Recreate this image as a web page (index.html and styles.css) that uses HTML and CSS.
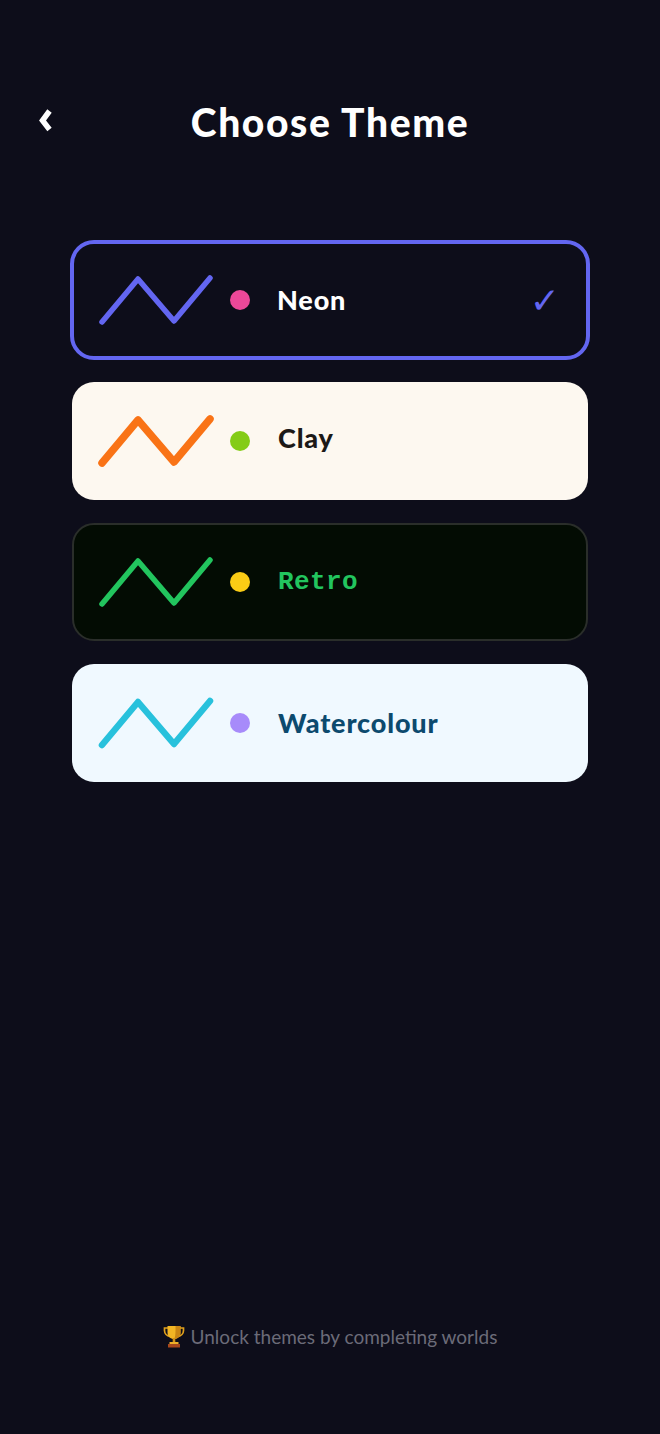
FILE: index.html
```html
<!DOCTYPE html>
<html lang="en">
<head>
    <meta charset="UTF-8">
    <meta name="viewport" content="width=device-width, initial-scale=1.0">
    <title>Choose Theme</title>
    <link rel="stylesheet" href="styles.css">
</head>
<body>
    <div class="screen">
        <header class="topbar">
            <button class="back" aria-label="Back">
                <svg width="16" height="26" viewBox="0 0 16 26">
                    <polyline points="13.500,3 6.500,12.500 13.500,21.500" fill="none" stroke="#fff" stroke-width="5.500"/>
                </svg>
            </button>
            <h1>Choose Theme</h1>
        </header>

        <div class="theme-list">
            <div class="card neon">
                <svg class="spark" width="120" height="60" viewBox="0 0 120 60"><polyline points="6,52 42,9 78,51 114,8"/></svg>
                <span class="dot"></span>
                <span class="name">Neon</span>
                <span class="check">✓</span>
            </div>
            <div class="card clay">
                <svg class="spark" width="120" height="60" viewBox="0 0 120 60"><polyline points="6,52 42,9 78,51 114,8"/></svg>
                <span class="dot"></span>
                <span class="name">Clay</span>
            </div>
            <div class="card retro">
                <svg class="spark" width="120" height="60" viewBox="0 0 120 60"><polyline points="6,52 42,9 78,51 114,8"/></svg>
                <span class="dot"></span>
                <span class="name">Retro</span>
            </div>
            <div class="card water">
                <svg class="spark" width="120" height="60" viewBox="0 0 120 60"><polyline points="6,52 42,9 78,51 114,8"/></svg>
                <span class="dot"></span>
                <span class="name">Watercolour</span>
            </div>
        </div>

        <footer class="hint">
            <svg class="trophy" width="22" height="23" viewBox="0 0 22 23">
                <path d="M5 3H1.500v2.500c0 3 2.500 5.500 5.500 6M17 3h3.500v2.500c0 3-2.500 5.500-5.500 6" fill="none" stroke="#e0a01c" stroke-width="1.700"/>
                <path d="M4.500 1h13v6.500c0 4-2.800 6.500-6.500 6.500s-6.500-2.500-6.500-6.500z" fill="#f2b524"/>
                <path d="M12.500 1h5v6.500c0 4-2.800 6.500-6.500 6.500 1.800-1.500 1.500-8 1.500-13z" fill="#c98514"/>
                <rect x="9.700" y="13" width="2.600" height="4.500" fill="#d08f18"/>
                <rect x="6.500" y="17" width="9" height="2" fill="#eeb02a"/>
                <rect x="5" y="19" width="12" height="3.500" fill="#a8481c"/>
            </svg>
            <span>Unlock themes by completing worlds</span>
        </footer>
    </div>
</body>
</html>
```

FILE: styles.css
```css
body {
    margin: 0;
    background-color: #0d0d1a;
    font-family: Lato, "Open Sans", sans-serif;
}
.screen {
    height: 1434px;
    display: flex;
    flex-direction: column;
    overflow: hidden;
}
.topbar {
    position: relative;
    height: 52px;
    margin-top: 96px;
    display: flex;
    align-items: center;
    justify-content: center;
}
.topbar h1 {
    margin: 0;
    font-size: 39px;
    font-weight: 900;
    letter-spacing: 1.600px;
    color: #fff;
}
.back {
    position: absolute;
    left: 36px;
    top: 12px;
    padding: 0;
    border: none;
    background: none;
    line-height: 0;
}
.theme-list {
    margin-top: 92px;
    padding: 0 70px;
    display: flex;
    flex-direction: column;
    gap: 23px;
}
.card {
    height: 118px;
    margin: 0 2px;
    padding: 0 24px;
    display: flex;
    align-items: center;
    border-radius: 22px;
    box-sizing: border-box;
}
.spark polyline {
    fill: none;
    stroke-linecap: round;
    stroke-linejoin: round;
    stroke-width: 5.500;
}
.dot {
    width: 20px;
    height: 20px;
    margin-left: 14px;
    border-radius: 50%;
}
.name {
    margin-left: 28px;
    margin-bottom: 2px;
    font-size: 27px;
    font-weight: 900;
    letter-spacing: 0.850px;
}
.check {
    margin-left: auto;
    padding-right: 4px;
    font-family: "DejaVu Sans", sans-serif;
    font-size: 36px;
    font-weight: 700;
    color: #6366f1;
}

.neon {
    height: 120px;
    margin: 0 0 -1px;
    padding: 0 22px;
    border: 4px solid #6366f1;
    border-radius: 24px;
    background: #0d0d1a;
}
.neon .spark polyline { stroke: #6366f1; }
.neon .dot { background: #ec4899; }
.neon .name { margin-left: 27px; color: #fff; }

.clay { background: #fdf8f0; }
.clay .spark polyline { stroke: #f97316; stroke-width: 7.500; }
.clay .dot { background: #84cc16; }
.clay .name { margin-bottom: 8px; color: #1c1917; }

.retro {
    background: #030c03;
    border: 2px solid #2a2e2a;
    padding: 0 22px;
}
.retro .spark polyline { stroke: #22c55e; }
.retro .dot { background: #facc15; }
.retro .name {
    margin-bottom: 0;
    font-family: "Liberation Mono", monospace;
    font-size: 26px;
    font-weight: 700;
    letter-spacing: 0.400px;
    color: #22c55e;
}

.water { background: #f0f9ff; }
.water .spark polyline { stroke: #28c1dc; stroke-width: 6.500; }
.water .dot { background: #a78bfa; }
.water .name { color: #0c4a6e; }

.hint {
    margin-top: auto;
    margin-bottom: 86px;
    display: flex;
    align-items: center;
    justify-content: center;
    gap: 6px;
    font-size: 19px;
    color: #6b6b78;
}
```
